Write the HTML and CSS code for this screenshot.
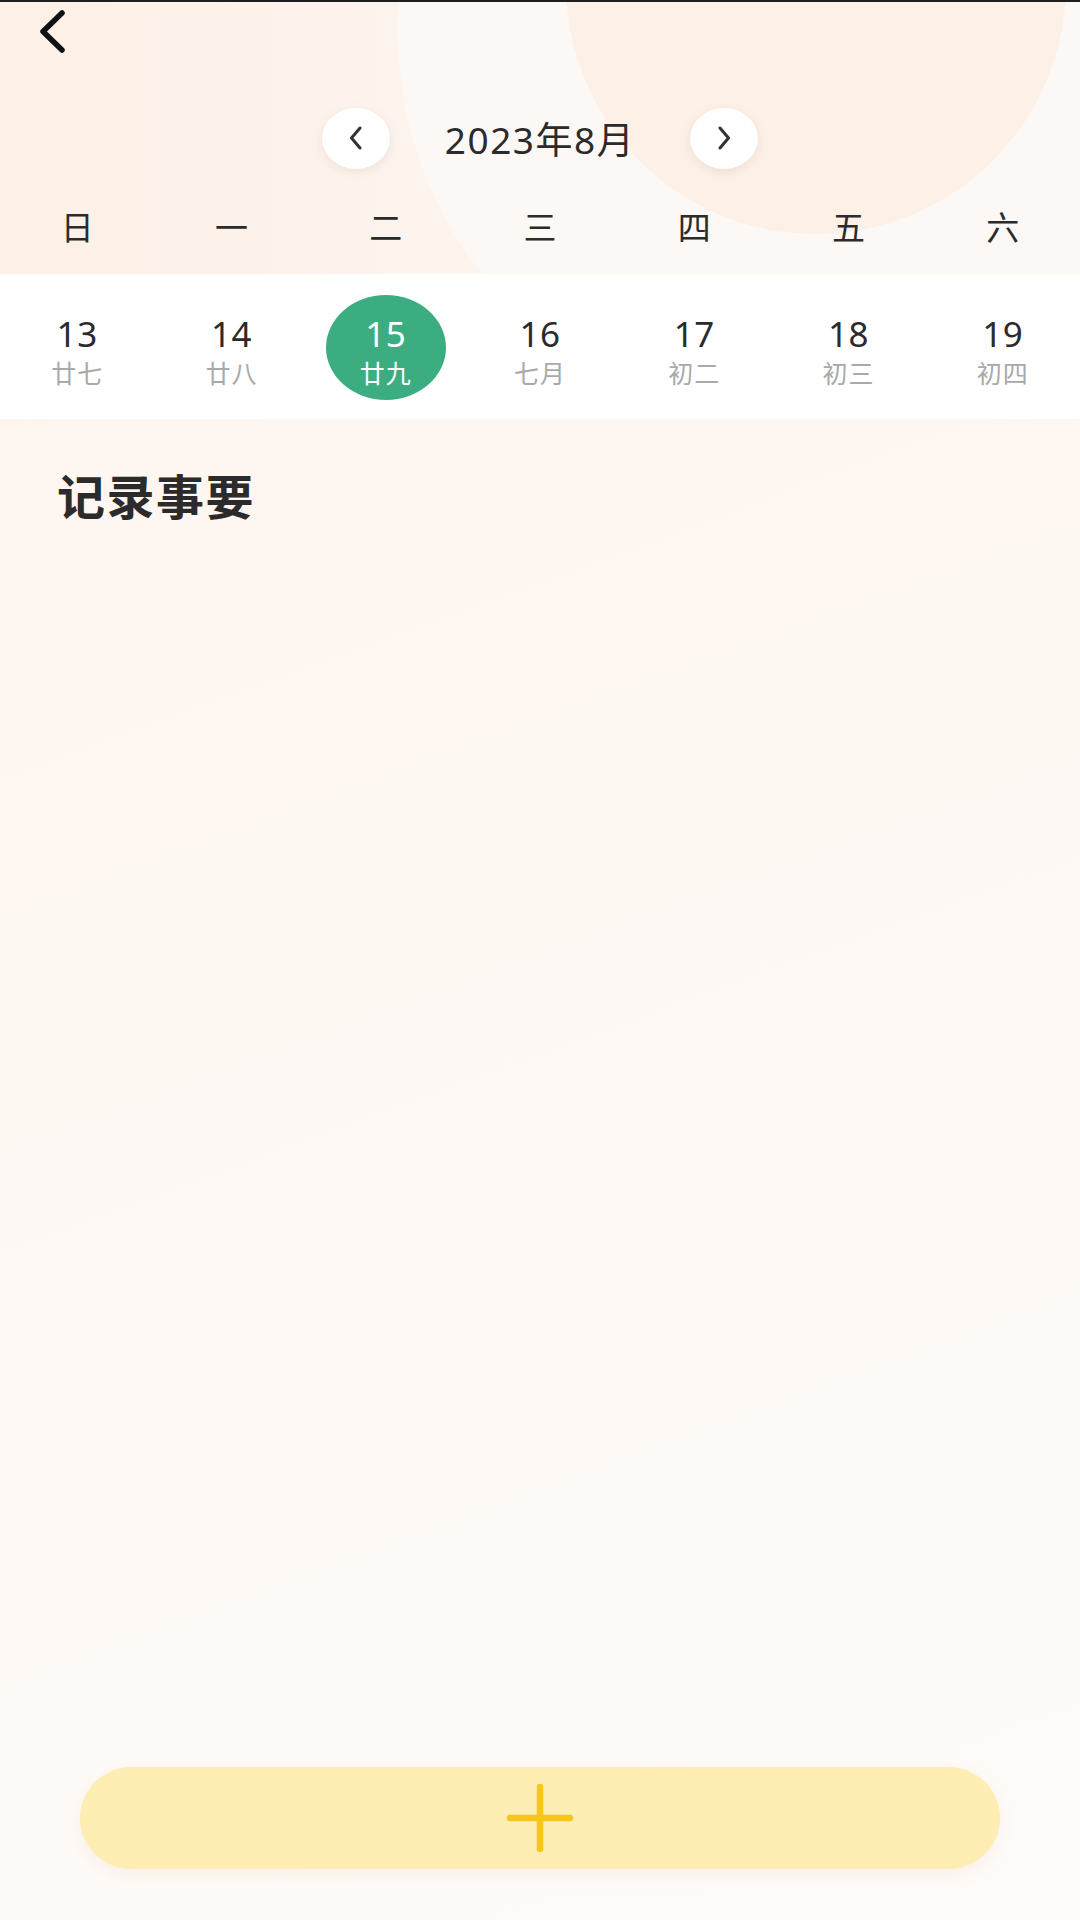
FILE: index.html
```html
<!DOCTYPE html>
<html lang="zh-CN">
<head>
    <meta charset="UTF-8">
    <meta name="viewport" content="width=device-width, initial-scale=1.0">
    <title>记录事要</title>
    <link rel="stylesheet" href="styles.css">
</head>
<body>
    <div class="page">
        <header class="header">
            <div class="bubble bubble-light"></div>
            <div class="bubble bubble-peach"></div>

            <div class="topbar">
                <button class="back" aria-label="返回">
                    <svg width="32" height="44" viewBox="0 0 32 44">
                        <path d="M25 3 L6 21.5 L25 40" fill="none" stroke="#111" stroke-width="5.5" stroke-linecap="round" stroke-linejoin="round"/>
                    </svg>
                </button>
            </div>

            <div class="month-nav">
                <button class="nav-btn" aria-label="上个月">
                    <svg width="14" height="24" viewBox="0 0 14 24">
                        <path d="M11 2 L2.5 12 L11 22" fill="none" stroke="#333" stroke-width="3" stroke-linecap="round" stroke-linejoin="round"/>
                    </svg>
                </button>
                <div class="month-title">2023年8月</div>
                <button class="nav-btn" aria-label="下个月">
                    <svg width="14" height="24" viewBox="0 0 14 24">
                        <path d="M3 2 L11.5 12 L3 22" fill="none" stroke="#333" stroke-width="3" stroke-linecap="round" stroke-linejoin="round"/>
                    </svg>
                </button>
            </div>

            <div class="weekdays">
                <span>日</span>
                <span>一</span>
                <span>二</span>
                <span>三</span>
                <span>四</span>
                <span>五</span>
                <span>六</span>
            </div>
        </header>

        <div class="week">
            <div class="day"><span class="num">13</span><span class="lunar">廿七</span></div>
            <div class="day"><span class="num">14</span><span class="lunar">廿八</span></div>
            <div class="day active"><span class="num">15</span><span class="lunar">廿九</span></div>
            <div class="day"><span class="num">16</span><span class="lunar">七月</span></div>
            <div class="day"><span class="num">17</span><span class="lunar">初二</span></div>
            <div class="day"><span class="num">18</span><span class="lunar">初三</span></div>
            <div class="day"><span class="num">19</span><span class="lunar">初四</span></div>
        </div>

        <main class="content">
            <h2 class="section-title">记录事要</h2>
        </main>

        <div class="footer">
            <button class="add-btn" aria-label="添加">
                <svg width="68" height="70" viewBox="0 0 68 70">
                    <path d="M34 4 V66 M4 35 H64" fill="none" stroke="#f8c51a" stroke-width="6.5" stroke-linecap="round"/>
                </svg>
            </button>
        </div>
    </div>
</body>
</html>
```

FILE: styles.css
```css
:root {
    --text: #2b2b2b;
    --muted: #a9a9a9;
    --green: #3bad81;
    --peach-bg: #fdf1e8;
    --add-bg: #feeeb4;
}

* {
    box-sizing: border-box;
}

body {
    margin: 0;
    font-family: "Noto Sans", "Noto Sans CJK SC", sans-serif;
    color: var(--text);
    background: linear-gradient(160deg, #fef4ed 0%, #fef8f3 45%, #fefbf9 100%);
}

button {
    border: none;
    background: none;
    padding: 0;
    cursor: pointer;
    font: inherit;
}

.page {
    display: flex;
    flex-direction: column;
    min-height: 1920px;
    border-top: 2px solid #1e1e1e;
}

/* header */

.header {
    position: relative;
    overflow: hidden;
    height: 272px;
    padding-top: 8px;
    background: linear-gradient(90deg, #fdf0e6 0%, #fdf4ee 40%, #fdf3ec 100%);
}

.bubble {
    position: absolute;
    border-radius: 50%;
}

.bubble-light {
    width: 780px;
    height: 780px;
    left: 398px;
    top: -360px;
    background: #fcf8f5;
}

.bubble-peach {
    width: 500px;
    height: 500px;
    left: 566px;
    top: -268px;
    background: #fdf0e6;
}

.topbar,
.month-nav,
.weekdays {
    position: relative;
}

.topbar {
    height: 48px;
    padding-left: 37px;
}

.back {
    display: block;
    width: 32px;
    height: 44px;
}

.month-nav {
    display: flex;
    align-items: center;
    justify-content: center;
    gap: 55px;
    margin-top: 50px;
    height: 60px;
}

.nav-btn {
    width: 68px;
    height: 61px;
    border-radius: 50%;
    background: #fff;
    display: flex;
    align-items: center;
    justify-content: center;
    box-shadow: 0 3px 8px rgba(200, 170, 150, 0.25);
}

.month-title {
    font-size: 37px;
    line-height: 60px;
    color: var(--text);
    letter-spacing: 1.5px;
    padding-top: 4px;
}

.weekdays {
    display: grid;
    grid-template-columns: repeat(7, 1fr);
    margin-top: 28px;
    height: 64px;
    line-height: 64px;
    text-align: center;
    font-size: 33px;
    color: var(--text);
}

/* week strip */

.week {
    display: grid;
    grid-template-columns: repeat(7, 1fr);
    height: 145px;
    padding-top: 10px;
    background: #fff;
}

.day {
    position: relative;
    display: flex;
    flex-direction: column;
    align-items: center;
    justify-content: center;
}

.day .num,
.day .lunar {
    position: relative;
}

.day .num {
    font-size: 35px;
    line-height: 40px;
    letter-spacing: 0.5px;
    color: var(--text);
}

.day .lunar {
    margin-top: 3px;
    font-size: 25px;
    line-height: 32px;
    letter-spacing: 1px;
    color: var(--muted);
}

.day.active::before {
    content: "";
    position: absolute;
    width: 120px;
    height: 105px;
    left: 50%;
    top: 50%;
    margin: -57px 0 0 -60px;
    border-radius: 50%;
    background: var(--green);
}

.day.active .num,
.day.active .lunar {
    color: #fff;
}

/* content */

.content {
    flex: 1;
    padding: 46px 57px 0;
}

.section-title {
    margin: 0;
    font-size: 48px;
    line-height: 64px;
    font-weight: 700;
    color: var(--text);
    letter-spacing: 1.5px;
}

/* footer */

.footer {
    padding: 0 80px 51px;
}

.add-btn {
    width: 100%;
    height: 102px;
    border-radius: 51px;
    background: var(--add-bg);
    display: flex;
    align-items: center;
    justify-content: center;
    box-shadow: 0 6px 16px rgba(220, 190, 150, 0.15);
}
```
